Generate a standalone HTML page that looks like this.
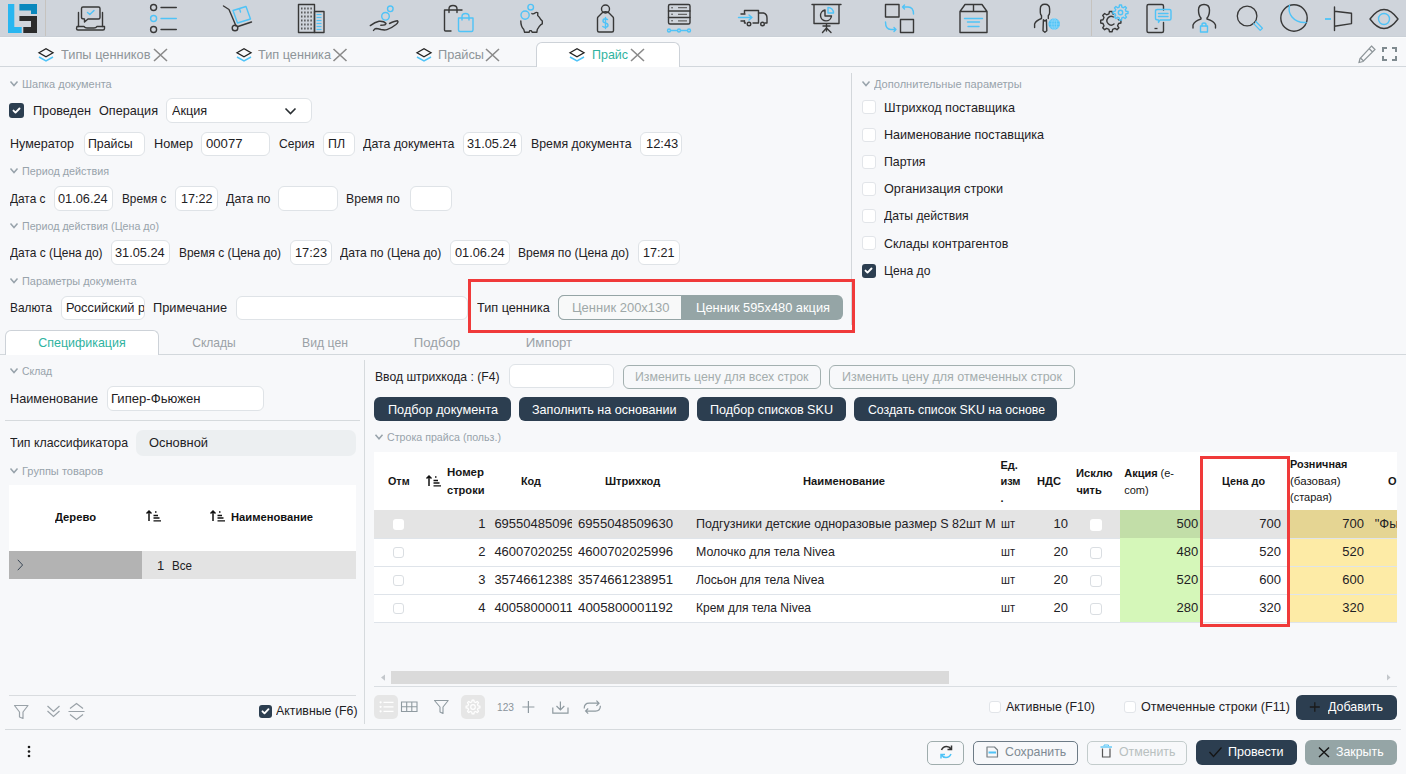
<!DOCTYPE html><html><head><meta charset="utf-8"><style>
html,body{margin:0;padding:0;}body{width:1406px;height:774px;overflow:hidden;position:relative;background:#f7f8fa;font-family:"Liberation Sans", sans-serif;}
.t{position:absolute;white-space:nowrap;}.r{position:absolute;}
svg.ov{position:absolute;left:0;top:0;}
</style></head><body>
<div class="r" style="left:0px;top:0px;width:1406px;height:37px;background:#cfd4db;"></div>
<div class="r" style="left:0px;top:36px;width:1406px;height:1px;background:#cad0d7;"></div>
<div class="r" style="left:0px;top:37px;width:1406px;height:1px;background:#fbfcfd;"></div>
<div class="r" style="left:45px;top:0px;width:1px;height:36px;background:#c6c3bf;"></div>
<div class="r" style="left:1091px;top:0px;width:1px;height:36px;background:#c6c3bf;"></div>
<div class="r" style="left:0px;top:66px;width:1406px;height:1px;background:#d2d7dc;"></div>
<div class="r" style="left:536px;top:42px;width:144px;height:25px;background:#ffffff;border:1px solid #cdd2d8;box-sizing:border-box;border-bottom:none;border-radius:6px 6px 0 0;"></div>
<div class="t" style="top:45.00px;font-size:13px;line-height:20px;color:#8e9599;left:60.5px;transform:scaleX(0.9863);transform-origin:0 0;">Типы ценников</div>
<div class="t" style="top:45.00px;font-size:13px;line-height:20px;color:#8e9599;left:258px;transform:scaleX(0.9781);transform-origin:0 0;">Тип ценника</div>
<div class="t" style="top:45.00px;font-size:13px;line-height:20px;color:#8e9599;left:438px;transform:scaleX(0.9806);transform-origin:0 0;">Прайсы</div>
<div class="t" style="top:45.00px;font-size:13px;line-height:20px;color:#2fb39f;left:591.5px;transform:scaleX(0.9583);transform-origin:0 0;">Прайс</div>
<div class="t" style="top:74.19px;font-size:11px;line-height:20px;color:#98a3ab;left:22px;transform:scaleX(0.9965);transform-origin:0 0;">Шапка документа</div>
<div class="r" style="left:9px;top:103px;width:15px;height:15px;background:#2c3e50;border-radius:3px;"></div>
<div class="t" style="top:100.50px;font-size:13px;line-height:20px;color:#1e2124;left:32.6px;transform:scaleX(0.9747);transform-origin:0 0;">Проведен</div>
<div class="t" style="top:100.50px;font-size:13px;line-height:20px;color:#1e2124;left:99px;transform:scaleX(0.9738);transform-origin:0 0;">Операция</div>
<div class="r" style="left:166px;top:98px;width:146px;height:25px;background:#ffffff;border:1px solid #dfe3e7;box-sizing:border-box;border-radius:6px;"></div>
<div class="t" style="top:100.50px;font-size:13px;line-height:20px;color:#1e2124;left:171.8px;transform:scaleX(0.9749);transform-origin:0 0;">Акция</div>
<div class="t" style="top:133.50px;font-size:13px;line-height:20px;color:#1e2124;left:9.9px;transform:scaleX(0.9646);transform-origin:0 0;">Нумератор</div>
<div class="r" style="left:83.6px;top:131.5px;width:61px;height:24px;background:#ffffff;border:1px solid #dfe3e7;box-sizing:border-box;border-radius:6px;"></div>
<div class="t" style="top:133.50px;font-size:13px;line-height:20px;color:#1e2124;left:88.3px;transform:scaleX(0.9486);transform-origin:0 0;">Прайсы</div>
<div class="t" style="top:133.50px;font-size:13px;line-height:20px;color:#1e2124;left:153.5px;transform:scaleX(0.9746);transform-origin:0 0;">Номер</div>
<div class="r" style="left:201px;top:131.5px;width:69px;height:24px;background:#ffffff;border:1px solid #dfe3e7;box-sizing:border-box;border-radius:6px;"></div>
<div class="t" style="top:133.50px;font-size:13px;line-height:20px;color:#1e2124;left:206px;transform:scaleX(1.0097);transform-origin:0 0;">00077</div>
<div class="t" style="top:133.50px;font-size:13px;line-height:20px;color:#1e2124;left:278.5px;transform:scaleX(0.9306);transform-origin:0 0;">Серия</div>
<div class="r" style="left:322.7px;top:131.5px;width:32px;height:24px;background:#ffffff;border:1px solid #dfe3e7;box-sizing:border-box;border-radius:6px;"></div>
<div class="t" style="top:133.50px;font-size:13px;line-height:20px;color:#1e2124;left:328px;transform:scaleX(0.9510);transform-origin:0 0;">ПЛ</div>
<div class="t" style="top:133.50px;font-size:13px;line-height:20px;color:#1e2124;left:362.7px;transform:scaleX(0.9532);transform-origin:0 0;">Дата документа</div>
<div class="r" style="left:462.5px;top:131.5px;width:59px;height:24px;background:#ffffff;border:1px solid #dfe3e7;box-sizing:border-box;border-radius:6px;"></div>
<div class="t" style="top:133.50px;font-size:13px;line-height:20px;color:#1e2124;left:467.3px;transform:scaleX(0.9821);transform-origin:0 0;">31.05.24</div>
<div class="t" style="top:133.50px;font-size:13px;line-height:20px;color:#1e2124;left:531px;transform:scaleX(0.9472);transform-origin:0 0;">Время документа</div>
<div class="r" style="left:640px;top:131.5px;width:42px;height:24px;background:#ffffff;border:1px solid #dfe3e7;box-sizing:border-box;border-radius:6px;"></div>
<div class="t" style="top:133.50px;font-size:13px;line-height:20px;color:#1e2124;left:645.7px;transform:scaleX(0.9929);transform-origin:0 0;">12:43</div>
<div class="t" style="top:161.19px;font-size:11px;line-height:20px;color:#98a3ab;left:22px;transform:scaleX(0.9797);transform-origin:0 0;">Период действия</div>
<div class="t" style="top:188.50px;font-size:13px;line-height:20px;color:#1e2124;left:9.5px;transform:scaleX(0.9126);transform-origin:0 0;">Дата с</div>
<div class="r" style="left:53.5px;top:186px;width:59px;height:24.5px;background:#ffffff;border:1px solid #dfe3e7;box-sizing:border-box;border-radius:6px;"></div>
<div class="t" style="top:188.50px;font-size:13px;line-height:20px;color:#1e2124;left:57.8px;transform:scaleX(0.9821);transform-origin:0 0;">01.06.24</div>
<div class="t" style="top:188.50px;font-size:13px;line-height:20px;color:#1e2124;left:121.5px;transform:scaleX(0.9041);transform-origin:0 0;">Время с</div>
<div class="r" style="left:174.5px;top:186px;width:43px;height:24.5px;background:#ffffff;border:1px solid #dfe3e7;box-sizing:border-box;border-radius:6px;"></div>
<div class="t" style="top:188.50px;font-size:13px;line-height:20px;color:#1e2124;left:180.5px;transform:scaleX(0.9683);transform-origin:0 0;">17:22</div>
<div class="t" style="top:188.50px;font-size:13px;line-height:20px;color:#1e2124;left:225.5px;transform:scaleX(0.9535);transform-origin:0 0;">Дата по</div>
<div class="r" style="left:278px;top:186px;width:59.5px;height:24.5px;background:#ffffff;border:1px solid #dfe3e7;box-sizing:border-box;border-radius:6px;"></div>
<div class="t" style="top:188.50px;font-size:13px;line-height:20px;color:#1e2124;left:346.3px;transform:scaleX(0.9423);transform-origin:0 0;">Время по</div>
<div class="r" style="left:409.5px;top:186px;width:42px;height:24.5px;background:#ffffff;border:1px solid #dfe3e7;box-sizing:border-box;border-radius:6px;"></div>
<div class="t" style="top:216.19px;font-size:11px;line-height:20px;color:#98a3ab;left:22px;transform:scaleX(0.9701);transform-origin:0 0;">Период действия (Цена до)</div>
<div class="t" style="top:243.00px;font-size:13px;line-height:20px;color:#1e2124;left:9.5px;transform:scaleX(0.9172);transform-origin:0 0;">Дата с (Цена до)</div>
<div class="r" style="left:110.8px;top:240px;width:59px;height:25px;background:#ffffff;border:1px solid #dfe3e7;box-sizing:border-box;border-radius:6px;"></div>
<div class="t" style="top:243.00px;font-size:13px;line-height:20px;color:#1e2124;left:115.3px;transform:scaleX(0.9821);transform-origin:0 0;">31.05.24</div>
<div class="t" style="top:243.00px;font-size:13px;line-height:20px;color:#1e2124;left:178.5px;transform:scaleX(0.9175);transform-origin:0 0;">Время с (Цена до)</div>
<div class="r" style="left:289.5px;top:240px;width:42px;height:25px;background:#ffffff;border:1px solid #dfe3e7;box-sizing:border-box;border-radius:6px;"></div>
<div class="t" style="top:243.00px;font-size:13px;line-height:20px;color:#1e2124;left:295px;transform:scaleX(0.9837);transform-origin:0 0;">17:23</div>
<div class="t" style="top:243.00px;font-size:13px;line-height:20px;color:#1e2124;left:340px;transform:scaleX(0.9326);transform-origin:0 0;">Дата по (Цена до)</div>
<div class="r" style="left:450.3px;top:240px;width:59.5px;height:25px;background:#ffffff;border:1px solid #dfe3e7;box-sizing:border-box;border-radius:6px;"></div>
<div class="t" style="top:243.00px;font-size:13px;line-height:20px;color:#1e2124;left:455px;transform:scaleX(0.9821);transform-origin:0 0;">01.06.24</div>
<div class="t" style="top:243.00px;font-size:13px;line-height:20px;color:#1e2124;left:518px;transform:scaleX(0.9332);transform-origin:0 0;">Время по (Цена до)</div>
<div class="r" style="left:637.5px;top:240px;width:42px;height:25px;background:#ffffff;border:1px solid #dfe3e7;box-sizing:border-box;border-radius:6px;"></div>
<div class="t" style="top:243.00px;font-size:13px;line-height:20px;color:#1e2124;left:643px;transform:scaleX(0.9683);transform-origin:0 0;">17:21</div>
<div class="t" style="top:271.19px;font-size:11px;line-height:20px;color:#98a3ab;left:22px;transform:scaleX(0.9928);transform-origin:0 0;">Параметры документа</div>
<div class="t" style="top:297.50px;font-size:13px;line-height:20px;color:#1e2124;left:9.5px;transform:scaleX(0.9133);transform-origin:0 0;">Валюта</div>
<div class="r" style="left:60.5px;top:295.7px;width:84px;height:24px;background:#ffffff;border:1px solid #dfe3e7;box-sizing:border-box;border-radius:6px;"></div>
<div class="t" style="left:65.5px;top:297.5px;width:78px;overflow:hidden;font-size:13px;line-height:20px;color:#1e2124;"><span style="display:inline-block;transform:scaleX(0.985);transform-origin:0 0;">Российский рубль</span></div>
<div class="t" style="top:297.50px;font-size:13px;line-height:20px;color:#1e2124;left:153px;transform:scaleX(0.9835);transform-origin:0 0;">Примечание</div>
<div class="r" style="left:236px;top:295.7px;width:232px;height:24px;background:#ffffff;border:1px solid #dfe3e7;box-sizing:border-box;border-radius:6px;"></div>
<div class="r" style="left:851px;top:73px;width:1px;height:252px;background:#d3d7db;"></div>
<div class="r" style="left:468px;top:279px;width:387px;height:54px;border:3px solid #f03a3a;box-sizing:border-box;"></div>
<div class="t" style="top:297.50px;font-size:13px;line-height:20px;color:#1e2124;left:477px;transform:scaleX(0.9754);transform-origin:0 0;">Тип ценника</div>
<div class="r" style="left:558.2px;top:295.4px;width:284.8px;height:24.3px;background:#95a5a6;border-radius:6px;"></div>
<div class="r" style="left:558.2px;top:295.4px;width:123.4px;height:24.3px;background:#f8f9f9;border:1px solid #95a5a6;box-sizing:border-box;border-radius:6px 0 0 6px;"></div>
<div class="t" style="top:297.50px;font-size:13px;line-height:20px;color:#9ea8a8;left:571.5px;transform:scaleX(0.9985);transform-origin:0 0;">Ценник 200x130</div>
<div class="t" style="top:297.50px;font-size:13px;line-height:20px;color:#ffffff;left:695.5px;transform:scaleX(0.9859);transform-origin:0 0;">Ценник 595x480 акция</div>
<div class="t" style="top:74.19px;font-size:11px;line-height:20px;color:#98a3ab;left:874px;transform:scaleX(1.0053);transform-origin:0 0;">Дополнительные параметры</div>
<div class="r" style="left:861.5px;top:100.3px;width:14px;height:14px;background:#ffffff;border:1px solid #e2e5e9;box-sizing:border-box;border-radius:3px;"></div>
<div class="t" style="top:97.60px;font-size:13px;line-height:20px;color:#1e2124;left:884.4px;transform:scaleX(0.9725);transform-origin:0 0;">Штрихкод поставщика</div>
<div class="r" style="left:861.5px;top:127.5px;width:14px;height:14px;background:#ffffff;border:1px solid #e2e5e9;box-sizing:border-box;border-radius:3px;"></div>
<div class="t" style="top:124.80px;font-size:13px;line-height:20px;color:#1e2124;left:884.4px;transform:scaleX(0.9662);transform-origin:0 0;">Наименование поставщика</div>
<div class="r" style="left:861.5px;top:154.7px;width:14px;height:14px;background:#ffffff;border:1px solid #e2e5e9;box-sizing:border-box;border-radius:3px;"></div>
<div class="t" style="top:152.00px;font-size:13px;line-height:20px;color:#1e2124;left:884.4px;transform:scaleX(0.9481);transform-origin:0 0;">Партия</div>
<div class="r" style="left:861.5px;top:181.89999999999998px;width:14px;height:14px;background:#ffffff;border:1px solid #e2e5e9;box-sizing:border-box;border-radius:3px;"></div>
<div class="t" style="top:179.20px;font-size:13px;line-height:20px;color:#1e2124;left:884.4px;transform:scaleX(0.9764);transform-origin:0 0;">Организация строки</div>
<div class="r" style="left:861.5px;top:209.1px;width:14px;height:14px;background:#ffffff;border:1px solid #e2e5e9;box-sizing:border-box;border-radius:3px;"></div>
<div class="t" style="top:206.40px;font-size:13px;line-height:20px;color:#1e2124;left:884.4px;transform:scaleX(0.9348);transform-origin:0 0;">Даты действия</div>
<div class="r" style="left:861.5px;top:236.3px;width:14px;height:14px;background:#ffffff;border:1px solid #e2e5e9;box-sizing:border-box;border-radius:3px;"></div>
<div class="t" style="top:233.60px;font-size:13px;line-height:20px;color:#1e2124;left:884.4px;transform:scaleX(0.9558);transform-origin:0 0;">Склады контрагентов</div>
<div class="r" style="left:861.5px;top:263.5px;width:14px;height:14px;background:#2c3e50;border-radius:3px;"></div>
<div class="t" style="top:260.80px;font-size:13px;line-height:20px;color:#1e2124;left:884.4px;transform:scaleX(0.9339);transform-origin:0 0;">Цена до</div>
<div class="r" style="left:0px;top:354px;width:1406px;height:1px;background:#d3d8dc;"></div>
<div class="r" style="left:5.3px;top:330.2px;width:153.5px;height:24.8px;background:#ffffff;border:1px solid #cdd2d8;box-sizing:border-box;border-bottom:none;border-radius:6px 6px 0 0;"></div>
<div class="t" style="top:332.50px;font-size:13px;line-height:20px;color:#2fb39f;left:-217.7px;width:600px;text-align:center;transform:scaleX(0.9576);transform-origin:50% 0;">Спецификация</div>
<div class="t" style="top:332.50px;font-size:13px;line-height:20px;color:#9aa1a6;left:-86.4px;width:600px;text-align:center;transform:scaleX(0.9283);transform-origin:50% 0;">Склады</div>
<div class="t" style="top:332.50px;font-size:13px;line-height:20px;color:#9aa1a6;left:24.5px;width:600px;text-align:center;transform:scaleX(0.9378);transform-origin:50% 0;">Вид цен</div>
<div class="t" style="top:332.50px;font-size:13px;line-height:20px;color:#9aa1a6;left:136.8px;width:600px;text-align:center;transform:scaleX(1.0114);transform-origin:50% 0;">Подбор</div>
<div class="t" style="top:332.50px;font-size:13px;line-height:20px;color:#9aa1a6;left:249.20000000000005px;width:600px;text-align:center;transform:scaleX(1.0187);transform-origin:50% 0;">Импорт</div>
<div class="r" style="left:364px;top:360px;width:1px;height:364px;background:#d6dadd;"></div>
<div class="t" style="top:361.19px;font-size:11px;line-height:20px;color:#98a3ab;left:22px;transform:scaleX(0.9424);transform-origin:0 0;">Склад</div>
<div class="t" style="top:388.50px;font-size:13px;line-height:20px;color:#1e2124;left:9.5px;transform:scaleX(0.9765);transform-origin:0 0;">Наименование</div>
<div class="r" style="left:106.5px;top:386px;width:157px;height:24.5px;background:#ffffff;border:1px solid #dfe3e7;box-sizing:border-box;border-radius:6px;"></div>
<div class="t" style="top:388.50px;font-size:13px;line-height:20px;color:#1e2124;left:111px;transform:scaleX(1.0083);transform-origin:0 0;">Гипер-Фьюжен</div>
<div class="r" style="left:5px;top:420px;width:355px;height:1px;background:#d6dadd;"></div>
<div class="t" style="top:433.30px;font-size:13px;line-height:20px;color:#1e2124;left:9.5px;transform:scaleX(0.9473);transform-origin:0 0;">Тип классификатора</div>
<div class="r" style="left:136px;top:430.3px;width:220px;height:25.4px;background:#eceff1;border-radius:7px;"></div>
<div class="t" style="top:433.30px;font-size:13px;line-height:20px;color:#1e2124;left:149px;transform:scaleX(0.9900);transform-origin:0 0;">Основной</div>
<div class="t" style="top:461.19px;font-size:11px;line-height:20px;color:#98a3ab;left:22px;transform:scaleX(1.0042);transform-origin:0 0;">Группы товаров</div>
<div class="r" style="left:9px;top:485px;width:347px;height:66px;background:#ffffff;"></div>
<div class="t" style="top:507.19px;font-size:11px;line-height:20px;color:#111;font-weight:bold;left:55px;transform:scaleX(1.0183);transform-origin:0 0;">Дерево</div>
<div class="t" style="top:507.19px;font-size:11px;line-height:20px;color:#111;font-weight:bold;left:231px;transform:scaleX(1.0161);transform-origin:0 0;">Наименование</div>
<div class="r" style="left:9px;top:551px;width:133px;height:28px;background:#b3b3b3;"></div>
<div class="r" style="left:142px;top:551px;width:214px;height:28px;background:#e3e3e3;"></div>
<div class="t" style="top:555.50px;font-size:13px;line-height:20px;color:#1e2124;left:157px;">1</div>
<div class="t" style="top:555.50px;font-size:13px;line-height:20px;color:#1e2124;left:172px;transform:scaleX(0.8928);transform-origin:0 0;">Все</div>
<div class="r" style="left:9px;top:695px;width:347px;height:1px;background:#d9dcdf;"></div>
<div class="r" style="left:259px;top:704.7px;width:13px;height:13px;background:#2c3e50;border-radius:3px;"></div>
<div class="t" style="top:700.70px;font-size:13px;line-height:20px;color:#1e2124;left:276px;transform:scaleX(0.9497);transform-origin:0 0;">Активные (F6)</div>
<div class="r" style="left:5px;top:729px;width:1396px;height:1px;background:#d6dadd;"></div>
<div class="t" style="top:366.50px;font-size:13px;line-height:20px;color:#1e2124;left:375px;transform:scaleX(0.9346);transform-origin:0 0;">Ввод штрихкода : (F4)</div>
<div class="r" style="left:508.5px;top:364.2px;width:105px;height:24.2px;background:#ffffff;border:1px solid #dfe3e7;box-sizing:border-box;border-radius:6px;"></div>
<div class="r" style="left:622.7px;top:364.5px;width:197.89999999999998px;height:24px;border:1px solid #a3b0b0;box-sizing:border-box;border-radius:6px;"></div>
<div class="t" style="top:366.50px;font-size:13px;line-height:20px;color:#a4adad;left:634.5px;transform:scaleX(0.9491);transform-origin:0 0;">Изменить цену для всех строк</div>
<div class="r" style="left:829.3px;top:364.5px;width:245.4000000000001px;height:24px;border:1px solid #a3b0b0;box-sizing:border-box;border-radius:6px;"></div>
<div class="t" style="top:366.50px;font-size:13px;line-height:20px;color:#a4adad;left:842px;transform:scaleX(0.9609);transform-origin:0 0;">Изменить цену для отмеченных строк</div>
<div class="r" style="left:374px;top:396.8px;width:136.7px;height:24.7px;background:#2c3e50;border-radius:6px;"></div>
<div class="t" style="top:399.80px;font-size:13px;line-height:20px;color:#ffffff;left:387.5px;transform:scaleX(0.9754);transform-origin:0 0;">Подбор документа</div>
<div class="r" style="left:519px;top:396.8px;width:169.5px;height:24.7px;background:#2c3e50;border-radius:6px;"></div>
<div class="t" style="top:399.80px;font-size:13px;line-height:20px;color:#ffffff;left:531.5px;transform:scaleX(0.9680);transform-origin:0 0;">Заполнить на основании</div>
<div class="r" style="left:697.2px;top:396.8px;width:148.5px;height:24.7px;background:#2c3e50;border-radius:6px;"></div>
<div class="t" style="top:399.80px;font-size:13px;line-height:20px;color:#ffffff;left:710px;transform:scaleX(0.9685);transform-origin:0 0;">Подбор списков SKU</div>
<div class="r" style="left:854.4px;top:396.8px;width:202.19999999999993px;height:24.7px;background:#2c3e50;border-radius:6px;"></div>
<div class="t" style="top:399.80px;font-size:13px;line-height:20px;color:#ffffff;left:867.5px;transform:scaleX(0.9441);transform-origin:0 0;">Создать список SKU на основе</div>
<div class="t" style="top:427.49px;font-size:11px;line-height:20px;color:#98a3ab;left:387px;transform:scaleX(0.9672);transform-origin:0 0;">Строка прайса (польз.)</div>
<div class="r" style="left:374px;top:452px;width:1023px;height:58px;background:#ffffff;"></div>
<div class="r" style="left:374px;top:510px;width:746px;height:28.5px;background:#e4e4e4;"></div>
<div class="r" style="left:1120px;top:510px;width:81px;height:28.5px;background:#c2dea8;"></div>
<div class="r" style="left:1201px;top:510px;width:86px;height:28.5px;background:#e4e4e4;"></div>
<div class="r" style="left:1287px;top:510px;width:110px;height:28.5px;background:#e5d593;"></div>
<div class="r" style="left:392.8px;top:518.8px;width:11.5px;height:11.5px;background:#ffffff;border-radius:3px;"></div>
<div class="t" style="top:514.10px;font-size:13px;line-height:20px;color:#1e2124;left:-114.5px;width:600px;text-align:right;">1</div>
<div class="t" style="left:494.4px;top:514.10px;width:77.5px;overflow:hidden;font-size:13px;line-height:20px;color:#1e2124;">69550485096</div>
<div class="t" style="top:514.10px;font-size:13px;line-height:20px;color:#1e2124;left:577.7px;transform:scaleX(1.0107);transform-origin:0 0;">6955048509630</div>
<div class="t" style="top:514.10px;font-size:13px;line-height:20px;color:#1e2124;left:696px;transform:scaleX(0.9643);transform-origin:0 0;">Подгузники детские одноразовые размер S 82шт M</div>
<div class="t" style="top:514.10px;font-size:13px;line-height:20px;color:#1e2124;left:1001px;transform:scaleX(0.8545);transform-origin:0 0;">шт</div>
<div class="t" style="top:514.10px;font-size:13px;line-height:20px;color:#1e2124;left:468px;width:600px;text-align:right;">10</div>
<div class="r" style="left:1089.5px;top:518.8px;width:12px;height:12px;background:#ffffff;border-radius:3px;"></div>
<div class="t" style="top:514.10px;font-size:13px;line-height:20px;color:#1e2124;left:598.3px;width:600px;text-align:right;">500</div>
<div class="t" style="top:514.10px;font-size:13px;line-height:20px;color:#1e2124;left:681px;width:600px;text-align:right;">700</div>
<div class="t" style="top:514.10px;font-size:13px;line-height:20px;color:#1e2124;left:764px;width:600px;text-align:right;">700</div>
<div class="t" style="left:1374.7px;top:514.10px;width:22.3px;overflow:hidden;font-size:13px;line-height:20px;color:#1e2124;">"Фыва</div>
<div class="r" style="left:374px;top:538px;width:746px;height:28px;background:#ffffff;"></div>
<div class="r" style="left:1120px;top:538px;width:81px;height:28px;background:#d5f7b9;"></div>
<div class="r" style="left:1201px;top:538px;width:86px;height:28px;background:#ffffff;"></div>
<div class="r" style="left:1287px;top:538px;width:110px;height:28px;background:#fdeba6;"></div>
<div class="r" style="left:392.8px;top:546.8px;width:11.5px;height:11.5px;background:#ffffff;border:1px solid #dadee2;box-sizing:border-box;border-radius:3px;"></div>
<div class="t" style="top:542.10px;font-size:13px;line-height:20px;color:#1e2124;left:-114.5px;width:600px;text-align:right;">2</div>
<div class="t" style="left:494.4px;top:542.10px;width:77.5px;overflow:hidden;font-size:13px;line-height:20px;color:#1e2124;">46007020259</div>
<div class="t" style="top:542.10px;font-size:13px;line-height:20px;color:#1e2124;left:577.7px;transform:scaleX(1.0107);transform-origin:0 0;">4600702025996</div>
<div class="t" style="top:542.10px;font-size:13px;line-height:20px;color:#1e2124;left:696px;transform:scaleX(0.9498);transform-origin:0 0;">Молочко для тела Nivea</div>
<div class="t" style="top:542.10px;font-size:13px;line-height:20px;color:#1e2124;left:1001px;transform:scaleX(0.8545);transform-origin:0 0;">шт</div>
<div class="t" style="top:542.10px;font-size:13px;line-height:20px;color:#1e2124;left:468px;width:600px;text-align:right;">20</div>
<div class="r" style="left:1089.5px;top:546.8px;width:12px;height:12px;background:#ffffff;border:1px solid #dadee2;box-sizing:border-box;border-radius:3px;"></div>
<div class="t" style="top:542.10px;font-size:13px;line-height:20px;color:#1e2124;left:598.3px;width:600px;text-align:right;">480</div>
<div class="t" style="top:542.10px;font-size:13px;line-height:20px;color:#1e2124;left:681px;width:600px;text-align:right;">520</div>
<div class="t" style="top:542.10px;font-size:13px;line-height:20px;color:#1e2124;left:764px;width:600px;text-align:right;">520</div>
<div class="r" style="left:374px;top:566px;width:746px;height:28px;background:#ffffff;"></div>
<div class="r" style="left:1120px;top:566px;width:81px;height:28px;background:#d5f7b9;"></div>
<div class="r" style="left:1201px;top:566px;width:86px;height:28px;background:#ffffff;"></div>
<div class="r" style="left:1287px;top:566px;width:110px;height:28px;background:#fdeba6;"></div>
<div class="r" style="left:392.8px;top:574.8px;width:11.5px;height:11.5px;background:#ffffff;border:1px solid #dadee2;box-sizing:border-box;border-radius:3px;"></div>
<div class="t" style="top:570.10px;font-size:13px;line-height:20px;color:#1e2124;left:-114.5px;width:600px;text-align:right;">3</div>
<div class="t" style="left:494.4px;top:570.10px;width:77.5px;overflow:hidden;font-size:13px;line-height:20px;color:#1e2124;">35746612389</div>
<div class="t" style="top:570.10px;font-size:13px;line-height:20px;color:#1e2124;left:577.7px;transform:scaleX(1.0107);transform-origin:0 0;">3574661238951</div>
<div class="t" style="top:570.10px;font-size:13px;line-height:20px;color:#1e2124;left:696px;transform:scaleX(0.9348);transform-origin:0 0;">Лосьон для тела Nivea</div>
<div class="t" style="top:570.10px;font-size:13px;line-height:20px;color:#1e2124;left:1001px;transform:scaleX(0.8545);transform-origin:0 0;">шт</div>
<div class="t" style="top:570.10px;font-size:13px;line-height:20px;color:#1e2124;left:468px;width:600px;text-align:right;">20</div>
<div class="r" style="left:1089.5px;top:574.8px;width:12px;height:12px;background:#ffffff;border:1px solid #dadee2;box-sizing:border-box;border-radius:3px;"></div>
<div class="t" style="top:570.10px;font-size:13px;line-height:20px;color:#1e2124;left:598.3px;width:600px;text-align:right;">520</div>
<div class="t" style="top:570.10px;font-size:13px;line-height:20px;color:#1e2124;left:681px;width:600px;text-align:right;">600</div>
<div class="t" style="top:570.10px;font-size:13px;line-height:20px;color:#1e2124;left:764px;width:600px;text-align:right;">600</div>
<div class="r" style="left:374px;top:594px;width:746px;height:28px;background:#ffffff;"></div>
<div class="r" style="left:1120px;top:594px;width:81px;height:28px;background:#d5f7b9;"></div>
<div class="r" style="left:1201px;top:594px;width:86px;height:28px;background:#ffffff;"></div>
<div class="r" style="left:1287px;top:594px;width:110px;height:28px;background:#fdeba6;"></div>
<div class="r" style="left:392.8px;top:602.8px;width:11.5px;height:11.5px;background:#ffffff;border:1px solid #dadee2;box-sizing:border-box;border-radius:3px;"></div>
<div class="t" style="top:598.10px;font-size:13px;line-height:20px;color:#1e2124;left:-114.5px;width:600px;text-align:right;">4</div>
<div class="t" style="left:494.4px;top:598.10px;width:77.5px;overflow:hidden;font-size:13px;line-height:20px;color:#1e2124;">40058000011</div>
<div class="t" style="top:598.10px;font-size:13px;line-height:20px;color:#1e2124;left:577.7px;transform:scaleX(1.0212);transform-origin:0 0;">4005800001192</div>
<div class="t" style="top:598.10px;font-size:13px;line-height:20px;color:#1e2124;left:696px;transform:scaleX(0.9224);transform-origin:0 0;">Крем для тела Nivea</div>
<div class="t" style="top:598.10px;font-size:13px;line-height:20px;color:#1e2124;left:1001px;transform:scaleX(0.8545);transform-origin:0 0;">шт</div>
<div class="t" style="top:598.10px;font-size:13px;line-height:20px;color:#1e2124;left:468px;width:600px;text-align:right;">20</div>
<div class="r" style="left:1089.5px;top:602.8px;width:12px;height:12px;background:#ffffff;border:1px solid #dadee2;box-sizing:border-box;border-radius:3px;"></div>
<div class="t" style="top:598.10px;font-size:13px;line-height:20px;color:#1e2124;left:598.3px;width:600px;text-align:right;">280</div>
<div class="t" style="top:598.10px;font-size:13px;line-height:20px;color:#1e2124;left:681px;width:600px;text-align:right;">320</div>
<div class="t" style="top:598.10px;font-size:13px;line-height:20px;color:#1e2124;left:764px;width:600px;text-align:right;">320</div>
<div class="r" style="left:374px;top:538px;width:746px;height:1px;background:#dfe4ea;"></div>
<div class="r" style="left:1201px;top:538px;width:196px;height:1px;background:#dfe4ea;"></div>
<div class="r" style="left:374px;top:566px;width:746px;height:1px;background:#dfe4ea;"></div>
<div class="r" style="left:1201px;top:566px;width:196px;height:1px;background:#dfe4ea;"></div>
<div class="r" style="left:374px;top:594px;width:746px;height:1px;background:#dfe4ea;"></div>
<div class="r" style="left:1201px;top:594px;width:196px;height:1px;background:#dfe4ea;"></div>
<div class="r" style="left:374px;top:622px;width:1023px;height:1px;background:#dfe4ea;"></div>
<div class="t" style="top:471.39px;font-size:11px;line-height:20px;color:#161616;font-weight:bold;left:387.6px;transform:scaleX(0.9782);transform-origin:0 0;">Отм</div>
<div class="t" style="top:462.49px;font-size:11px;line-height:20px;color:#161616;font-weight:bold;left:447px;transform:scaleX(1.0425);transform-origin:0 0;">Номер</div>
<div class="t" style="top:479.59px;font-size:11px;line-height:20px;color:#161616;font-weight:bold;left:447px;transform:scaleX(1.0078);transform-origin:0 0;">строки</div>
<div class="t" style="top:471.39px;font-size:11px;line-height:20px;color:#161616;font-weight:bold;left:521.4px;transform:scaleX(0.9867);transform-origin:0 0;">Код</div>
<div class="t" style="top:471.39px;font-size:11px;line-height:20px;color:#161616;font-weight:bold;left:604.7px;transform:scaleX(1.0044);transform-origin:0 0;">Штрихкод</div>
<div class="t" style="top:471.39px;font-size:11px;line-height:20px;color:#161616;font-weight:bold;left:802.8px;transform:scaleX(1.0161);transform-origin:0 0;">Наименование</div>
<div class="t" style="top:455.09px;font-size:11px;line-height:20px;color:#161616;font-weight:bold;left:1000.4px;">Ед.</div>
<div class="t" style="top:471.39px;font-size:11px;line-height:20px;color:#161616;font-weight:bold;left:1000.4px;">изм</div>
<div class="t" style="top:488.09px;font-size:11px;line-height:20px;color:#161616;font-weight:bold;left:1000.4px;">.</div>
<div class="t" style="top:471.39px;font-size:11px;line-height:20px;color:#161616;font-weight:bold;left:1037.4px;transform:scaleX(1.0116);transform-origin:0 0;">НДС</div>
<div class="t" style="top:462.69px;font-size:11px;line-height:20px;color:#161616;font-weight:bold;left:1076.4px;transform:scaleX(1.0154);transform-origin:0 0;">Исклю</div>
<div class="t" style="top:479.69px;font-size:11px;line-height:20px;color:#161616;font-weight:bold;left:1076.4px;">чить</div>
<div class="t" style="top:462.69px;font-size:11px;line-height:20px;color:#161616;font-weight:bold;left:1124.2px;">Акция</div>
<div class="t" style="top:462.69px;font-size:11px;line-height:20px;color:#161616;left:1160.5px;">(e-</div>
<div class="t" style="top:479.69px;font-size:11px;line-height:20px;color:#161616;left:1124.2px;">com)</div>
<div class="t" style="top:471.39px;font-size:11px;line-height:20px;color:#161616;font-weight:bold;left:1222.3px;transform:scaleX(0.9816);transform-origin:0 0;">Цена до</div>
<div class="t" style="top:453.89px;font-size:11px;line-height:20px;color:#161616;font-weight:bold;left:1289.7px;transform:scaleX(0.9866);transform-origin:0 0;">Розничная</div>
<div class="t" style="top:470.59px;font-size:11px;line-height:20px;color:#161616;left:1289.5px;transform:scaleX(1.0477);transform-origin:0 0;">(базовая)</div>
<div class="t" style="top:487.39px;font-size:11px;line-height:20px;color:#161616;left:1289.5px;transform:scaleX(0.9988);transform-origin:0 0;">(старая)</div>
<div class="t" style="top:471.39px;font-size:11px;line-height:20px;color:#161616;font-weight:bold;left:1388px;">О</div>
<div class="r" style="left:1200.3px;top:455.8px;width:89.3px;height:170.8px;border:3.4px solid #f03a3a;box-sizing:border-box;"></div>
<div class="r" style="left:391px;top:671.2px;width:558px;height:12.4px;background:#dadada;"></div>
<div class="r" style="left:374px;top:686px;width:1023px;height:1px;background:#dadee2;"></div>
<div class="r" style="left:374.3px;top:695.1px;width:23.5px;height:23.6px;background:#e6e6e6;border-radius:5px;"></div>
<div class="r" style="left:461.3px;top:695.1px;width:23.4px;height:23.6px;background:#e6e6e6;border-radius:5px;"></div>
<div class="t" style="top:697.19px;font-size:11px;line-height:20px;color:#8a949a;left:496.7px;transform:scaleX(0.9263);transform-origin:0 0;">123</div>
<div class="r" style="left:988.5px;top:701.2px;width:12px;height:12px;background:#ffffff;border:1px solid #e2e5e9;box-sizing:border-box;border-radius:3px;"></div>
<div class="t" style="top:697.00px;font-size:13px;line-height:20px;color:#1e2124;left:1005.5px;transform:scaleX(0.9565);transform-origin:0 0;">Активные (F10)</div>
<div class="r" style="left:1124px;top:701.2px;width:12px;height:12px;background:#ffffff;border:1px solid #e2e5e9;box-sizing:border-box;border-radius:3px;"></div>
<div class="t" style="top:697.00px;font-size:13px;line-height:20px;color:#1e2124;left:1141px;transform:scaleX(0.9680);transform-origin:0 0;">Отмеченные строки (F11)</div>
<div class="r" style="left:1296px;top:695.1px;width:101px;height:24.5px;background:#2c3e50;border-radius:6px;"></div>
<div class="t" style="top:697.00px;font-size:13px;line-height:20px;color:#fff;left:1328.2px;transform:scaleX(0.9573);transform-origin:0 0;">Добавить</div>
<div class="r" style="left:927.4px;top:740.6px;width:37px;height:24px;border:1px solid #9fadad;box-sizing:border-box;border-radius:5px;"></div>
<div class="r" style="left:973.4px;top:740.6px;width:105px;height:24px;border:1.2px solid #6d7b86;box-sizing:border-box;border-radius:5px;"></div>
<div class="t" style="top:742.40px;font-size:13px;line-height:20px;color:#7e8a93;left:1004.8px;transform:scaleX(0.9474);transform-origin:0 0;">Сохранить</div>
<div class="r" style="left:1087.3px;top:740.6px;width:100.2px;height:24px;border:1px solid #c3cccc;box-sizing:border-box;border-radius:5px;"></div>
<div class="t" style="top:742.40px;font-size:13px;line-height:20px;color:#b8c0c0;left:1118.6px;transform:scaleX(0.9495);transform-origin:0 0;">Отменить</div>
<div class="r" style="left:1196.1px;top:740px;width:100.7px;height:24.8px;background:#2c3e50;border-radius:6px;"></div>
<div class="t" style="top:742.30px;font-size:13px;line-height:20px;color:#fff;left:1227.6px;transform:scaleX(0.9668);transform-origin:0 0;">Провести</div>
<div class="r" style="left:1305.2px;top:740px;width:91.7px;height:24.8px;background:#95a5a6;border-radius:6px;"></div>
<div class="t" style="top:742.30px;font-size:13px;line-height:20px;color:#fff;left:1335.6px;transform:scaleX(0.9507);transform-origin:0 0;">Закрыть</div>
<svg class="ov" width="1406" height="774" viewBox="0 0 1406 774">
<rect x="8" y="4" width="6.3" height="29" fill="#29b6f0"/><rect x="8" y="27" width="13.7" height="6" fill="#29b6f0"/>
<rect x="19.4" y="4" width="17.6" height="6.5" fill="#0a88bd"/><rect x="31" y="4" width="6" height="10" fill="#0a88bd"/>
<rect x="19.4" y="16" width="17.6" height="5" fill="#2b2b2b"/><rect x="31" y="16" width="6" height="17" fill="#2b2b2b"/><rect x="23.3" y="27" width="13.7" height="6" fill="#2b2b2b"/>
<path d="M78.5 12.5 V26.5 M102.5 12.5 V26.5" fill="none" stroke="#383838" stroke-width="1.4" stroke-linecap="round" stroke-linejoin="round"/>
<path d="M77 26.5 H84 Q85 28 87 28 H94 Q96 28 97 26.5 H104.5 V28.5 Q104.5 30 103 30 H78 Q76.5 30 76.5 28.5 Z" fill="none" stroke="#383838" stroke-width="1.4" stroke-linecap="round" stroke-linejoin="round"/>
<path d="M83 7 H98.5 Q100 7 100 8.5 V17.5 Q100 19 98.5 19 H88 L84.5 22 V19 Q81.5 19 81.5 17.5 V8.5 Q81.5 7 83 7 Z" fill="none" stroke="#383838" stroke-width="1.4" stroke-linecap="round" stroke-linejoin="round"/>
<path d="M87.5 12.5 L89.8 14.6 L94 10.5" fill="none" stroke="#4fc3f7" stroke-width="1.4" stroke-linecap="round" stroke-linejoin="round"/>
<circle cx="153.6" cy="7.5" r="3" fill="none" stroke="#383838" stroke-width="1.4" stroke-linecap="round" stroke-linejoin="round"/><path d="M161 7.5 H176.3" fill="none" stroke="#383838" stroke-width="1.4" stroke-linecap="round" stroke-linejoin="round"/>
<circle cx="153.6" cy="18.5" r="3" fill="none" stroke="#4fc3f7" stroke-width="1.4" stroke-linecap="round" stroke-linejoin="round"/><path d="M161 18.5 H176.3" fill="none" stroke="#4fc3f7" stroke-width="1.4" stroke-linecap="round" stroke-linejoin="round"/>
<circle cx="153.6" cy="29.5" r="3" fill="none" stroke="#383838" stroke-width="1.4" stroke-linecap="round" stroke-linejoin="round"/><path d="M161 29.5 H176.3" fill="none" stroke="#383838" stroke-width="1.4" stroke-linecap="round" stroke-linejoin="round"/>
<path d="M223.5 6 L229 9.5 L236 26" fill="none" stroke="#383838" stroke-width="1.4" stroke-linecap="round" stroke-linejoin="round"/><circle cx="235" cy="28" r="2.8" fill="none" stroke="#383838" stroke-width="1.4" stroke-linecap="round" stroke-linejoin="round"/><path d="M238 26.5 L251.5 22" fill="none" stroke="#383838" stroke-width="1.4" stroke-linecap="round" stroke-linejoin="round"/>
<path d="M233 10.5 L246 6.5 L250.5 19 L237.5 23 Z M239.5 8.5 L240.5 12" fill="none" stroke="#4fc3f7" stroke-width="1.4" stroke-linecap="round" stroke-linejoin="round"/>
<rect x="298.5" y="4.5" width="16" height="28" fill="none" stroke="#383838" stroke-width="1.4" stroke-linecap="round" stroke-linejoin="round"/><rect x="314.5" y="11.5" width="9.5" height="21" fill="none" stroke="#383838" stroke-width="1.4" stroke-linecap="round" stroke-linejoin="round"/>
<rect x="301.2" y="7.5" width="1.2" height="2" fill="#383838"/><rect x="304.29999999999995" y="7.5" width="1.2" height="2" fill="#383838"/><rect x="307.4" y="7.5" width="1.2" height="2" fill="#383838"/><rect x="310.5" y="7.5" width="1.2" height="2" fill="#383838"/><rect x="301.2" y="11.5" width="1.2" height="2" fill="#383838"/><rect x="304.29999999999995" y="11.5" width="1.2" height="2" fill="#383838"/><rect x="307.4" y="11.5" width="1.2" height="2" fill="#383838"/><rect x="310.5" y="11.5" width="1.2" height="2" fill="#383838"/><rect x="301.2" y="15.5" width="1.2" height="2" fill="#383838"/><rect x="304.29999999999995" y="15.5" width="1.2" height="2" fill="#383838"/><rect x="307.4" y="15.5" width="1.2" height="2" fill="#383838"/><rect x="310.5" y="15.5" width="1.2" height="2" fill="#383838"/><rect x="301.2" y="19.5" width="1.2" height="2" fill="#383838"/><rect x="304.29999999999995" y="19.5" width="1.2" height="2" fill="#383838"/><rect x="307.4" y="19.5" width="1.2" height="2" fill="#383838"/><rect x="310.5" y="19.5" width="1.2" height="2" fill="#383838"/><rect x="301.2" y="23.5" width="1.2" height="2" fill="#383838"/><rect x="304.29999999999995" y="23.5" width="1.2" height="2" fill="#383838"/><rect x="307.4" y="23.5" width="1.2" height="2" fill="#383838"/><rect x="310.5" y="23.5" width="1.2" height="2" fill="#383838"/><rect x="301.2" y="27.5" width="1.2" height="2" fill="#383838"/><rect x="304.29999999999995" y="27.5" width="1.2" height="2" fill="#383838"/><rect x="307.4" y="27.5" width="1.2" height="2" fill="#383838"/><rect x="310.5" y="27.5" width="1.2" height="2" fill="#383838"/>
<path d="M316.5 14.5 H321.5" stroke="#4fc3f7" stroke-width="1.2"/><path d="M316.5 17.5 H321.5" stroke="#4fc3f7" stroke-width="1.2"/><path d="M316.5 20.5 H321.5" stroke="#4fc3f7" stroke-width="1.2"/><path d="M316.5 23.5 H321.5" stroke="#4fc3f7" stroke-width="1.2"/><path d="M316.5 26.5 H321.5" stroke="#4fc3f7" stroke-width="1.2"/><path d="M316.5 29.5 H321.5" stroke="#4fc3f7" stroke-width="1.2"/>
<circle cx="390.3" cy="8.8" r="2.8" fill="none" stroke="#4fc3f7" stroke-width="1.4" stroke-linecap="round" stroke-linejoin="round"/><circle cx="385.5" cy="16.3" r="3.8" fill="none" stroke="#4fc3f7" stroke-width="1.4" stroke-linecap="round" stroke-linejoin="round"/>
<path d="M370.3 25.6 Q375 22 379 21.3 Q384 21 386 23.5 Q386 25.3 380.8 25.3 M389.5 23.5 Q395 20.8 397.5 20.8 Q399 21.8 396 24.5 Q391 28.5 387 29.6 Q384.5 30.3 381 29.5 Q377.5 28.5 376 28.5 Q374.5 28.7 373.5 30.5" fill="none" stroke="#383838" stroke-width="1.4" stroke-linecap="round" stroke-linejoin="round"/>
<path d="M451 31 H445.5 Q444.5 31 444.5 30 V10 H462" fill="none" stroke="#383838" stroke-width="1.4" stroke-linecap="round" stroke-linejoin="round"/><path d="M449 12.5 V9 Q449 5.5 453 5.5 Q457 5.5 457 9 V12.5" fill="none" stroke="#383838" stroke-width="1.4" stroke-linecap="round" stroke-linejoin="round"/>
<path d="M458.5 18 H473 V30 Q473 31.5 471.5 31.5 H460 Q458.5 31.5 458.5 30 Z M462 20 V16.5 Q462 13.5 465.5 13.5 Q469 13.5 469 16.5 V20" fill="none" stroke="#4fc3f7" stroke-width="1.4" stroke-linecap="round" stroke-linejoin="round"/>
<circle cx="530.7" cy="7.2" r="2.8" fill="none" stroke="#4fc3f7" stroke-width="1.4" stroke-linecap="round" stroke-linejoin="round"/><circle cx="525.1" cy="15.1" r="4.1" fill="none" stroke="#4fc3f7" stroke-width="1.4" stroke-linecap="round" stroke-linejoin="round"/>
<path d="M531.9 13.6 Q533.5 14.3 535 13 Q536.5 11.8 537.8 12.8 L537.7 15.5 Q539.5 17 541 19.8 L542.3 21 V23.8 L541 24.6 Q539 26.5 537.3 29.5 L536.8 32.3 H532.3 L531.2 30.6 H529.8 L529.2 32.3 H524.6 L523.8 29.6 Q520.8 26.5 520.8 21" fill="none" stroke="#383838" stroke-width="1.4" stroke-linecap="round" stroke-linejoin="round"/>
<path d="M602.5 12.5 L598 17 Q597.5 17.5 597.5 18.5 V30.5 Q597.5 32 599 32 H612 Q613.5 32 613.5 30.5 V18.5 Q613.5 17.5 613 17 L608.5 12.5 Q605.5 11 602.5 12.5" fill="none" stroke="#383838" stroke-width="1.4" stroke-linecap="round" stroke-linejoin="round"/><circle cx="605.5" cy="9" r="4" fill="none" stroke="#383838" stroke-width="1.4" stroke-linecap="round" stroke-linejoin="round"/>
<path d="M607.5 19.5 Q606.5 18.8 605.2 18.8 Q603 19 603 21 Q603 22.5 605.5 23 Q608 23.5 608 25.3 Q608 27.3 605.3 27.3 Q603.8 27.3 602.8 26.5 M605.5 17.5 V28.5" fill="none" stroke="#4fc3f7" stroke-width="1.4" stroke-linecap="round" stroke-linejoin="round"/>
<rect x="668.5" y="4.5" width="21.5" height="19.5" rx="1.5" fill="none" stroke="#383838" stroke-width="1.4" stroke-linecap="round" stroke-linejoin="round"/><path d="M668.5 11 H690 M668.5 17.5 H690" fill="none" stroke="#383838" stroke-width="1.4" stroke-linecap="round" stroke-linejoin="round"/>
<path d="M678 7.7 H687 M678 14.3 H687 M678 20.8 H687" stroke="#666" stroke-width="1.3"/><path d="M672 7.7 h0.1 M672 14.3 h0.1 M672 20.8 h0.1" fill="none" stroke="#383838" stroke-width="1.4" stroke-linecap="round" stroke-linejoin="round"/>
<path d="M670.5 30.5 H677.5 M680.5 30.5 H687.5" fill="none" stroke="#4fc3f7" stroke-width="1.4" stroke-linecap="round" stroke-linejoin="round"/><circle cx="669" cy="30.5" r="1.5" fill="none" stroke="#4fc3f7" stroke-width="1.4" stroke-linecap="round" stroke-linejoin="round"/><circle cx="679" cy="30.5" r="1.5" fill="none" stroke="#4fc3f7" stroke-width="1.4" stroke-linecap="round" stroke-linejoin="round"/><circle cx="689" cy="30.5" r="1.5" fill="none" stroke="#4fc3f7" stroke-width="1.4" stroke-linecap="round" stroke-linejoin="round"/>
<path d="M744.5 13 V10.5 H758.5 V23 H753 M745.5 23 H744.5 V21" fill="none" stroke="#383838" stroke-width="1.4" stroke-linecap="round" stroke-linejoin="round"/><path d="M758.5 13 H763.5 Q767 14 767 18 V23 H765" fill="none" stroke="#383838" stroke-width="1.4" stroke-linecap="round" stroke-linejoin="round"/><circle cx="749" cy="24" r="1.8" fill="none" stroke="#383838" stroke-width="1.4" stroke-linecap="round" stroke-linejoin="round"/><circle cx="762.5" cy="24" r="1.8" fill="none" stroke="#383838" stroke-width="1.4" stroke-linecap="round" stroke-linejoin="round"/>
<path d="M741 14 H745 M741 21 H744.5" fill="none" stroke="#383838" stroke-width="1.4" stroke-linecap="round" stroke-linejoin="round"/><path d="M738.5 17.5 H752 M749 15 L752 17.5 L749 20" fill="none" stroke="#4fc3f7" stroke-width="1.4" stroke-linecap="round" stroke-linejoin="round"/>
<path d="M812 4.5 H841 M814 4.5 V23.5 H839 V4.5 M826.5 23.5 V31 M822.5 32.5 L826.5 28 L831 32.5 M823 26 H830" fill="none" stroke="#383838" stroke-width="1.4" stroke-linecap="round" stroke-linejoin="round"/>
<path d="M825 10 A5.5 5.5 0 1 0 831.5 16 H825 Z" fill="none" stroke="#383838" stroke-width="1.4" stroke-linecap="round" stroke-linejoin="round"/><path d="M828 7.5 A5.5 5.5 0 0 1 833.5 13 H828 Z" fill="none" stroke="#4fc3f7" stroke-width="1.4" stroke-linecap="round" stroke-linejoin="round"/>
<rect x="885.5" y="4.5" width="13.5" height="12.5" fill="none" stroke="#383838" stroke-width="1.4" stroke-linecap="round" stroke-linejoin="round"/><rect x="900.5" y="19.5" width="13" height="13" fill="none" stroke="#383838" stroke-width="1.4" stroke-linecap="round" stroke-linejoin="round"/>
<path d="M902.5 7 H908 Q913.5 7 913.5 14 M904.5 5 L902.5 7 L904.5 9" fill="none" stroke="#4fc3f7" stroke-width="1.4" stroke-linecap="round" stroke-linejoin="round"/><path d="M885.5 22 Q885.5 29.5 891 29.5 H896 M894 27.5 L896 29.5 L894 31.5" fill="none" stroke="#4fc3f7" stroke-width="1.4" stroke-linecap="round" stroke-linejoin="round"/>
<path d="M960 11.5 V32.5 H987 V11.5 L982 4.5 H965 Z M960 11.5 H987 M973.5 4.5 V11.5" fill="none" stroke="#383838" stroke-width="1.4" stroke-linecap="round" stroke-linejoin="round"/><path d="M964.5 18.5 H982.5 M967.5 22 H979.5 M968 26.5 H979" fill="none" stroke="#4fc3f7" stroke-width="1.4" stroke-linecap="round" stroke-linejoin="round"/>
<path d="M1041.5 18.5 V15.5 Q1040.3 14.5 1040.3 12.5 V9 Q1040.3 4.2 1044.9 4.2 Q1049.6 4.2 1049.6 9 V12.5 Q1049.6 14.5 1048.3 15.5 V18.5 M1041.5 18.5 Q1036 20.5 1034.6 24 V27.5" fill="none" stroke="#383838" stroke-width="1.4" stroke-linecap="round" stroke-linejoin="round"/><path d="M1043.4 19.8 L1044.9 21 L1046.4 19.8 L1046.8 30.8 L1044.9 32.3 L1043 30.8 Z" fill="none" stroke="#383838" stroke-width="1.4" stroke-linecap="round" stroke-linejoin="round"/>
<circle cx="1054.2" cy="24" r="5.8" fill="#4fc3f7"/><path d="M1048.5 24 H1060 M1054.2 18.2 V29.8 M1049.5 21 H1059 M1049.5 27 H1059" stroke="#9fdcf8" stroke-width="0.6"/><ellipse cx="1054.2" cy="24" rx="2.5" ry="5.6" fill="none" stroke="#9fdcf8" stroke-width="0.6"/>
<path d="M1118.58 19.73 L1120.91 20.24 L1120.91 22.96 L1118.58 23.47 L1117.62 25.78 L1118.91 27.79 L1116.99 29.71 L1114.98 28.42 L1112.67 29.38 L1112.16 31.71 L1109.44 31.71 L1108.93 29.38 L1106.62 28.42 L1104.61 29.71 L1102.69 27.79 L1103.98 25.78 L1103.02 23.47 L1100.69 22.96 L1100.69 20.24 L1103.02 19.73 L1103.98 17.42 L1102.69 15.41 L1104.61 13.49 L1106.62 14.78 L1108.93 13.82 L1109.44 11.49 L1112.16 11.49 L1112.67 13.82 L1114.98 14.78 L1116.99 13.49 L1118.91 15.41 L1117.62 17.42 Z" fill="none" stroke="#383838" stroke-width="1.4" stroke-linecap="round" stroke-linejoin="round"/>
<path d="M1113.5 17 A4.3 4.3 0 1 0 1114 24" fill="none" stroke="#383838" stroke-width="1.4" stroke-linecap="round" stroke-linejoin="round"/>
<circle cx="1120.5" cy="12.5" r="7" fill="#cfd4db"/>
<path d="M1125.95 11.19 L1128.03 11.49 L1128.03 13.51 L1125.95 13.81 L1125.27 15.43 L1126.54 17.11 L1125.11 18.54 L1123.43 17.27 L1121.81 17.95 L1121.51 20.03 L1119.49 20.03 L1119.19 17.95 L1117.57 17.27 L1115.89 18.54 L1114.46 17.11 L1115.73 15.43 L1115.05 13.81 L1112.97 13.51 L1112.97 11.49 L1115.05 11.19 L1115.73 9.57 L1114.46 7.89 L1115.89 6.46 L1117.57 7.73 L1119.19 7.05 L1119.49 4.97 L1121.51 4.97 L1121.81 7.05 L1123.43 7.73 L1125.11 6.46 L1126.54 7.89 L1125.27 9.57 Z" fill="none" stroke="#4fc3f7" stroke-width="1.4" stroke-linecap="round" stroke-linejoin="round"/>
<circle cx="1120.5" cy="12.5" r="2.2" fill="none" stroke="#4fc3f7" stroke-width="1.4" stroke-linecap="round" stroke-linejoin="round"/>
<path d="M1163.5 10 V6 Q1163.5 4.5 1162 4.5 H1148.5 Q1147 4.5 1147 6 V31 Q1147 32.5 1148.5 32.5 H1162 Q1163.5 32.5 1163.5 31 V22.5" fill="none" stroke="#383838" stroke-width="1.4" stroke-linecap="round" stroke-linejoin="round"/><path d="M1154.5 28.5 H1157.5" stroke="#383838" stroke-width="1.3"/>
<path d="M1157.5 9.5 H1169.5 Q1171 9.5 1171 11 V18.5 Q1171 20 1169.5 20 H1160 L1158.5 22.5 V20 Q1155.5 20 1155.5 18.5 V11 Q1155.5 9.5 1157.5 9.5 Z M1158.5 13.5 H1168 M1158.5 16.5 H1168" fill="none" stroke="#4fc3f7" stroke-width="1.4" stroke-linecap="round" stroke-linejoin="round"/>
<path d="M1201 19 V18 Q1198.5 15.5 1198.5 10 Q1198.5 4.5 1204 4.5 Q1209.5 4.5 1209.5 10 Q1209.5 15.5 1207 18 V19 Q1214 21 1215.5 25 V28 M1193 28 V25 Q1194.5 21 1201 19" fill="none" stroke="#383838" stroke-width="1.4" stroke-linecap="round" stroke-linejoin="round"/>
<rect x="1200.5" y="26" width="7" height="6" fill="none" stroke="#4fc3f7" stroke-width="1.4" stroke-linecap="round" stroke-linejoin="round"/><path d="M1202 26 V24.5 Q1202 23 1204 23 Q1206 23 1206 24.5 V26" fill="none" stroke="#4fc3f7" stroke-width="1.4" stroke-linecap="round" stroke-linejoin="round"/>
<circle cx="1247.1" cy="16" r="9.8" fill="none" stroke="#383838" stroke-width="1.3" stroke-linecap="round" stroke-linejoin="round"/><path d="M1253.4 23.4 L1260.2 30.4 L1262.4 28.2 L1255.6 21.2" fill="none" stroke="#4fc3f7" stroke-width="1.3" stroke-linejoin="round"/>
<circle cx="1294" cy="18" r="13.2" fill="none" stroke="#383838" stroke-width="1.4" stroke-linecap="round" stroke-linejoin="round"/><path d="M1289.5 5.5 Q1288 12 1292 17 Q1297 23 1306 22.5" fill="none" stroke="#4fc3f7" stroke-width="1.4" stroke-linecap="round" stroke-linejoin="round"/>
<path d="M1334.5 7 V30.5 M1334.5 11.3 L1351.5 13.3 V23.6 L1334.5 26.3" fill="none" stroke="#383838" stroke-width="1.4" stroke-linecap="round" stroke-linejoin="round"/><path d="M1325 19 H1331" stroke="#4fc3f7" stroke-width="1.8"/>
<path d="M1370 19 Q1377 9.5 1384 9.5 Q1391 9.5 1398 19 Q1391 28.5 1384 28.5 Q1377 28.5 1370 19 Z" fill="none" stroke="#383838" stroke-width="1.4" stroke-linecap="round" stroke-linejoin="round"/><circle cx="1384" cy="19" r="5.5" fill="none" stroke="#4fc3f7" stroke-width="1.4" stroke-linecap="round" stroke-linejoin="round"/>
<path d="M39 52.8 L46 48.8 L53 52.8 L46 56.8 Z" fill="none" stroke="#222" stroke-width="1.3" stroke-linejoin="miter"/><path d="M39 57 L46 61 L53 57" fill="none" stroke="#4fc3f7" stroke-width="1.5"/>
<path d="M154 49 L167 61 M167 49 L154 61" stroke="#8a8a8a" stroke-width="1.6"/>
<path d="M237 52.8 L244 48.8 L251 52.8 L244 56.8 Z" fill="none" stroke="#222" stroke-width="1.3" stroke-linejoin="miter"/><path d="M237 57 L244 61 L251 57" fill="none" stroke="#4fc3f7" stroke-width="1.5"/>
<path d="M333.5 49 L346.5 61 M346.5 49 L333.5 61" stroke="#8a8a8a" stroke-width="1.6"/>
<path d="M417 52.8 L424 48.8 L431 52.8 L424 56.8 Z" fill="none" stroke="#222" stroke-width="1.3" stroke-linejoin="miter"/><path d="M417 57 L424 61 L431 57" fill="none" stroke="#4fc3f7" stroke-width="1.5"/>
<path d="M486 49 L499 61 M499 49 L486 61" stroke="#8a8a8a" stroke-width="1.6"/>
<path d="M570 52.8 L577 48.8 L584 52.8 L577 56.8 Z" fill="none" stroke="#222" stroke-width="1.3" stroke-linejoin="miter"/><path d="M570 57 L577 61 L584 57" fill="none" stroke="#4fc3f7" stroke-width="1.5"/>
<path d="M631 49 L644 61 M644 49 L631 61" stroke="#8a8a8a" stroke-width="1.6"/>
<path d="M1371.5 46 L1375 49.5 L1363 61.5 L1359 62.5 L1360 58.5 Z M1369 48.5 L1372.5 52 M1360.5 58 L1363.5 61" fill="none" stroke="#8d9599" stroke-width="1.2"/>
<path d="M1383 52 V48 H1387 M1392 48 H1396 V52 M1396 56 V60 H1392 M1387 60 H1383 V56" fill="none" stroke="#7f8a8f" stroke-width="2"/>
<path d="M10.5 81.5 L14 85.5 L17.5 81.5" fill="none" stroke="#98a3ab" stroke-width="1.5"/>
<path d="M13.5 110.6 L15.5 112.6 L19.5 108.5" fill="none" stroke="#fff" stroke-width="1.9" stroke-linecap="round" stroke-linejoin="round"/>
<path d="M285.5 108.5 L290.5 113.5 L295.5 108.5" fill="none" stroke="#2a2f33" stroke-width="1.6"/>
<path d="M10.5 168.5 L14 172.5 L17.5 168.5" fill="none" stroke="#98a3ab" stroke-width="1.5"/>
<path d="M10.5 223.5 L14 227.5 L17.5 223.5" fill="none" stroke="#98a3ab" stroke-width="1.5"/>
<path d="M10.5 278.5 L14 282.5 L17.5 278.5" fill="none" stroke="#98a3ab" stroke-width="1.5"/>
<path d="M862.5 81.5 L866 85.5 L869.5 81.5" fill="none" stroke="#98a3ab" stroke-width="1.5"/>
<path d="M865.5 270.6 L867.5 272.6 L871.5 268.5" fill="none" stroke="#fff" stroke-width="1.9" stroke-linecap="round" stroke-linejoin="round"/>
<path d="M10.5 368.5 L14 372.5 L17.5 368.5" fill="none" stroke="#98a3ab" stroke-width="1.5"/>
<path d="M10.5 468.5 L14 472.5 L17.5 468.5" fill="none" stroke="#98a3ab" stroke-width="1.5"/>
<path d="M149 521 V511 M146.5 513.5 L149 511 L151.5 513.5" fill="none" stroke="#111" stroke-width="1.5"/>
<path d="M155 512 H156.5 M153.5 515.5 H158 M153.5 518 H159.5 M153.5 520.8 H161" stroke="#111" stroke-width="1.3"/>
<path d="M213 521 V511 M210.5 513.5 L213 511 L215.5 513.5" fill="none" stroke="#111" stroke-width="1.5"/>
<path d="M219 512 H220.5 M217.5 515.5 H222 M217.5 518 H223.5 M217.5 520.8 H225" stroke="#111" stroke-width="1.3"/>
<path d="M17.8 559.8 L22.6 565 L17.8 570.2" fill="none" stroke="#3a4756" stroke-width="1"/>
<path d="M14.5 705.5 H28 L23 712 V718.5 L19.5 717 V712 Z" fill="none" stroke="#9aa2a8" stroke-width="1.2" stroke-linejoin="round"/>
<path d="M47.5 706 L53.5 711.5 L59.5 706 M47.5 711 L53.5 716.5 L59.5 711" fill="none" stroke="#9aa2a8" stroke-width="1.2"/>
<path d="M70 708.5 L76.5 703.5 L83 708.5 M68.5 711.5 H84.5 M70 714.5 L76.5 719.5 L83 714.5" fill="none" stroke="#9aa2a8" stroke-width="1.2"/>
<path d="M262.5 711.3000000000001 L264.5 713.3000000000001 L268.5 709.2" fill="none" stroke="#fff" stroke-width="1.9" stroke-linecap="round" stroke-linejoin="round"/>
<circle cx="29" cy="747" r="1.3" fill="#1a1a1a"/><circle cx="29" cy="751.5" r="1.3" fill="#1a1a1a"/><circle cx="29" cy="756" r="1.3" fill="#1a1a1a"/>
<path d="M375.5 434.8 L379 438.8 L382.5 434.8" fill="none" stroke="#98a3ab" stroke-width="1.5"/>
<path d="M429 486 V476 M426.5 478.5 L429 476 L431.5 478.5" fill="none" stroke="#111" stroke-width="1.5"/>
<path d="M435 477 H436.5 M433.5 480.5 H438 M433.5 483 H439.5 M433.5 485.8 H441" stroke="#111" stroke-width="1.3"/>
<path d="M385 674.5 L381 677.6 L385 680.7 Z" fill="#c3c7cb"/>
<path d="M1387 674.3 L1390.5 677.4 L1387 680.5 Z" fill="#c3c7cb"/>
<circle cx="380.6" cy="702.3" r="1.1" fill="#fff"/><circle cx="380.6" cy="706.8" r="1.1" fill="#fff"/><circle cx="380.6" cy="711.3" r="1.1" fill="#fff"/><path d="M383.5 702.3 H393.5 M383.5 706.8 H393.5 M383.5 711.3 H393.5" stroke="#fff" stroke-width="1.2"/>
<path d="M401.5 702 H417 V711.5 H401.5 Z M401.5 706.7 H417 M406.7 702 V711.5 M411.8 702 V711.5" fill="none" stroke="#8f9aa0" stroke-width="1.1"/>
<path d="M434.5 700.5 H448.2 L443 707 V713.4 L440 712 V707 Z" fill="none" stroke="#8f9aa0" stroke-width="1.1" stroke-linejoin="round"/>
<path d="M478.06 705.79 L479.94 706.07 L479.94 707.93 L478.06 708.21 L477.43 709.72 L478.56 711.25 L477.25 712.56 L475.72 711.43 L474.21 712.06 L473.93 713.94 L472.07 713.94 L471.79 712.06 L470.28 711.43 L468.75 712.56 L467.44 711.25 L468.57 709.72 L467.94 708.21 L466.06 707.93 L466.06 706.07 L467.94 705.79 L468.57 704.28 L467.44 702.75 L468.75 701.44 L470.28 702.57 L471.79 701.94 L472.07 700.06 L473.93 700.06 L474.21 701.94 L475.72 702.57 L477.25 701.44 L478.56 702.75 L477.43 704.28 Z" fill="none" stroke="#fff" stroke-width="1.2" stroke-linejoin="round"/>
<circle cx="473" cy="707" r="2.3" fill="none" stroke="#fff" stroke-width="1.2"/>
<path d="M522.4 707 H534.4 M528.4 701 V713" stroke="#8f9aa0" stroke-width="1.2"/>
<path d="M552.8 707.5 V713.2 H568 V707.5 M560.4 701.5 V709.5 M556.5 706 L560.4 710 L564.3 706" fill="none" stroke="#8f9aa0" stroke-width="1.2"/>
<path d="M584.2 708.5 Q584.2 703.2 589.2 703.2 H598.8 M596.4 700.6 L599 703.2 L596.4 705.8 M600.4 705.8 Q600.4 711.1 595.4 711.1 H585.8 M588.2 708.5 L585.6 711.1 L588.2 713.7" fill="none" stroke="#8f9aa0" stroke-width="1.2"/>
<path d="M1309.8 707 H1319.8 M1314.8 702.3 V711.7" stroke="#1a1a1a" stroke-width="1.3"/>
<path d="M941.5 750 Q943 746.5 946.5 746.5 Q949.5 746.5 951 749 M951.5 745.5 V749.5 H947.5" fill="none" stroke="#333" stroke-width="1.5"/>
<path d="M951 754 Q949.5 757.5 946 757.5 Q943 757.5 941.5 755 M941 758.5 V754.5 H945" fill="none" stroke="#4fc3f7" stroke-width="1.5"/>
<path d="M987 747 H994.5 L997.5 750 V757 H987 Z" fill="none" stroke="#777f84" stroke-width="1.2" stroke-linejoin="round"/><path d="M988.5 752.5 H996" stroke="#4fc3f7" stroke-width="2"/>
<path d="M1100.5 747 H1112" stroke="#4fc3f7" stroke-width="1.3"/><path d="M1104 746 V745 H1108.5 V746" fill="none" stroke="#4fc3f7" stroke-width="1"/><path d="M1102.5 748.5 V757 H1110 V748.5" fill="none" stroke="#555" stroke-width="1.2"/>
<path d="M1209.5 752 L1213.5 756.5 L1221.5 747.5" fill="none" stroke="#151515" stroke-width="1.3"/>
<path d="M1319 747.5 L1329 757 M1329 747.5 L1319 757" stroke="#151515" stroke-width="1.4"/>
</svg></body></html>
